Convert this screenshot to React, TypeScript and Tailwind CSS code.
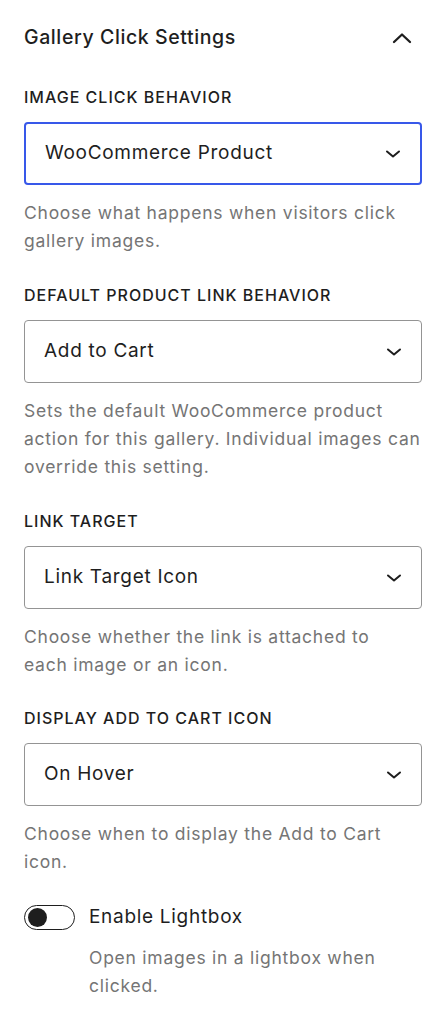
import React from "react";

const font = { fontFamily: "Inter, 'Noto Sans', sans-serif" };

function ChevronDown() {
  return (
    <svg width="16" height="10" viewBox="0 0 16 10" fill="none" className="shrink-0">
      <path d="M2 2.5 L8 7.5 L14 2.5" stroke="#1e1e1e" strokeWidth="2" strokeLinecap="round" strokeLinejoin="round" />
    </svg>
  );
}

function ChevronUp() {
  return (
    <svg width="20" height="12" viewBox="0 0 20 12" fill="none" className="shrink-0">
      <path d="M2 10 L10 2.5 L18 10" stroke="#1e1e1e" strokeWidth="2.3" strokeLinecap="round" strokeLinejoin="round" />
    </svg>
  );
}

function Lines({ lines }: { lines: string[] }) {
  return (
    <>
      {lines.map((l, i) => (
        <React.Fragment key={i}>
          {l}
          {i < lines.length - 1 && <br />}
        </React.Fragment>
      ))}
    </>
  );
}

function Field({
  label,
  value,
  help,
  focused,
  labelMt,
}: {
  label: string;
  value: string;
  help: string[];
  focused?: boolean;
  labelMt: string;
}) {
  return (
    <div className={labelMt}>
      <div className="h-[20px] leading-[20px] text-[16px] font-medium uppercase text-[#1e1e1e] tracking-[1px]">
        {label}
      </div>
      <div
        className={
          "mt-[15px] h-[63px] flex items-center justify-between pl-[19px] pr-[19px] rounded-[4px] bg-white " +
          (focused ? "border-2 border-[#3858e9]" : "border-[1.5px] border-[#949494]")
        }
      >
        <span className="text-[19px] text-[#1e1e1e] tracking-[0.7px]">{value}</span>
        <ChevronDown />
      </div>
      <p className="mt-[14px] text-[17.5px] leading-[28px] text-[#757575] tracking-[0.75px] whitespace-nowrap">
        <Lines lines={help} />
      </p>
    </div>
  );
}

export default function App() {
  return (
    <div className="w-[446px] min-h-[1024px] bg-white px-[24px] pt-[24px]" style={font}>
      <div className="h-[28px] flex items-center justify-between pr-[10px]">
        <span className="text-[19.5px] font-medium text-[#1e1e1e] tracking-[0.6px]">Gallery Click Settings</span>
        <ChevronUp />
      </div>
      <Field
        labelMt="mt-[35px]"
        label="Image Click Behavior"
        value="WooCommerce Product"
        help={["Choose what happens when visitors click", "gallery images."]}
        focused
      />
      <Field
        labelMt="mt-[30px]"
        label="Default Product Link Behavior"
        value="Add to Cart"
        help={[
          "Sets the default WooCommerce product",
          "action for this gallery. Individual images can",
          "override this setting.",
        ]}
      />
      <Field
        labelMt="mt-[30px]"
        label="Link Target"
        value="Link Target Icon"
        help={["Choose whether the link is attached to", "each image or an icon."]}
      />
      <Field
        labelMt="mt-[29px]"
        label="Display Add to Cart Icon"
        value="On Hover"
        help={["Choose when to display the Add to Cart", "icon."]}
      />
      <div className="mt-[27px] h-[28px] flex items-center gap-[14px]">
        <div className="w-[51px] h-[25px] rounded-full border-[1.5px] border-[#1e1e1e] flex items-center pl-[2.5px] bg-white">
          <div className="w-[19px] h-[19px] rounded-full bg-[#1e1e1e]" />
        </div>
        <span className="text-[19px] text-[#1e1e1e] tracking-[0.7px]">Enable Lightbox</span>
      </div>
      <p className="mt-[13px] ml-[65px] text-[17.5px] leading-[28px] text-[#757575] tracking-[0.75px] whitespace-nowrap">
        <Lines lines={["Open images in a lightbox when", "clicked."]} />
      </p>
    </div>
  );
}
